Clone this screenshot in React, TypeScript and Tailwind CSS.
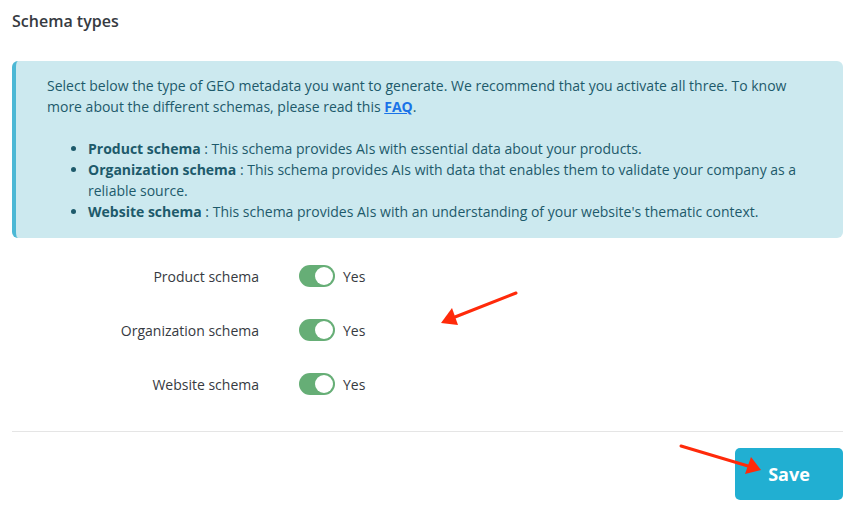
import React from "react";

function Toggle() {
  return (
    <div className="flex items-center">
      <div className="relative w-[36px] h-[22px] rounded-full bg-[#66ae76]">
        <div className="absolute right-[2px] top-[2px] w-[18px] h-[18px] rounded-full bg-white" />
      </div>
      <span className="ml-[8px] text-[14px] text-[#363a41]">Yes</span>
    </div>
  );
}

function Row({ label }: { label: string }) {
  return (
    <div className="flex items-center h-[54px]">
      <div className="w-[247px] text-right text-[14px] text-[#363a41]">{label}</div>
      <div className="ml-[40px]">
        <Toggle />
      </div>
    </div>
  );
}

export default function App() {
  return (
    <div
      className="relative w-[855px] h-[520px] bg-white overflow-hidden"
      style={{ fontFamily: '"Open Sans", sans-serif' }}
    >
      <div className="px-[12px]">
        <div className="pt-[10px] h-[61px] text-[16px] font-semibold text-[#363a41] leading-[22px]">
          Schema types
        </div>
        <div className="w-[831px] rounded-[6px] bg-[#cce9ef] border-l-[4px] border-[#4cb8d5] pl-[31px] pr-[34px] pt-[14px] pb-[16px] text-[14px] leading-[21px] text-[#1d5a6b]">
          <p>
            Select below the type of GEO metadata you want to generate. We recommend that you activate all three. To know
            more about the different schemas, please read this{" "}
            <a className="font-bold text-[#1a73e8] underline">FAQ</a>.
          </p>
          <ul className="mt-[21px] pl-[41px] list-disc">
            <li>
              <b>Product schema</b> : This schema provides AIs with essential data about your products.
            </li>
            <li>
              <b>Organization schema</b> : This schema provides AIs with data that enables them to validate your company as a
              reliable source.
            </li>
            <li>
              <b>Website schema</b> : This schema provides AIs with an understanding of your website's thematic context.
            </li>
          </ul>
        </div>
        <div className="mt-[11px]">
          <Row label="Product schema" />
          <Row label="Organization schema" />
          <Row label="Website schema" />
        </div>
        <div className="mt-[20px] border-t border-[#e5e5e5] w-[831px]" />
        <div className="flex justify-end w-[831px] mt-[16px]">
          <button className="w-[108px] h-[52px] rounded-[5px] bg-[#21afd2] text-white font-bold text-[18px]">
            Save
          </button>
        </div>
      </div>

      <svg className="absolute left-0 top-0 pointer-events-none" width="855" height="520">
        <line x1="516" y1="293" x2="455" y2="317" stroke="#ff2a0a" strokeWidth="3" strokeLinecap="round" />
        <polygon points="441,323 452,308 458,325" fill="#ff2a0a" />
        <line x1="681" y1="446" x2="748" y2="466" stroke="#ff2a0a" strokeWidth="3" strokeLinecap="round" />
        <polygon points="761,470 745,474 751,457" fill="#ff2a0a" />
      </svg>
    </div>
  );
}
